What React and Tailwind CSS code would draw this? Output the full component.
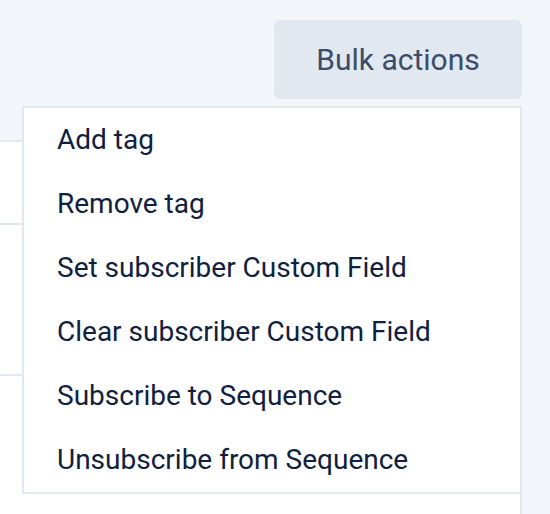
import { useState } from 'react'

const actions = [
  'Add tag',
  'Remove tag',
  'Set subscriber Custom Field',
  'Clear subscriber Custom Field',
  'Subscribe to Sequence',
  'Unsubscribe from Sequence',
]

export default function App() {
  const [open] = useState(true)

  return (
    <div className="relative w-[550px] h-[514px] overflow-hidden bg-[#f2f5f9] font-['Roboto',sans-serif]">
      <div className="flex justify-end pt-[20px] pr-[28px]">
        <button className="w-[248px] h-[79px] rounded-[6px] bg-[#e2e8ef] text-[30px] text-[#3b4d6b]">
          Bulk actions
        </button>
      </div>

      {/* table behind the menu */}
      <div className="mt-[41px] w-[522px] h-[400px] bg-white border-t-2 border-r-2 border-[#e2e8f0]">
        <div className="h-[83px] border-b-2 border-[#e2e8f0]" />
        <div className="h-[151px] border-b-2 border-[#e2e8f0]" />
      </div>

      {open && (
        <div className="absolute left-[22px] top-[106px] w-[500px] bg-white border-2 border-[#e2e8f0]">
          {actions.map((a) => (
            <div key={a} className="h-[64px] flex items-center pl-[33px] text-[28px] text-[#10213f]">
              {a}
            </div>
          ))}
        </div>
      )}
    </div>
  )
}
